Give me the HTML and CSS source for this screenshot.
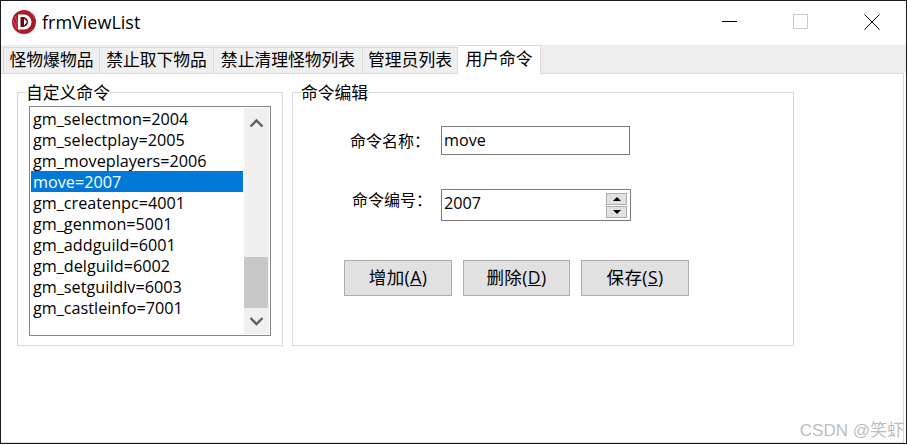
FILE: index.html
```html
<!DOCTYPE html>
<html lang="zh-CN">
<head>
<meta charset="utf-8">
<title>frmViewList</title>
<link rel="stylesheet" href="styles.css">
</head>
<body>
<div class="window">
  <header class="titlebar">
    <svg class="logo" width="24" height="24" viewBox="0 0 24 24">
      <circle cx="12" cy="12" r="12" fill="#a81c2c"/>
      <path d="M3 6 L8 21 M1 10 L5 19 M18 2 L23 8" stroke="#d8505c" stroke-width="1" fill="none"/>
      <path d="M6 4.5 H12 A7.5 7.5 0 0 1 12 19.5 H6 Z" fill="#fff"/>
      <path d="M8.5 7 H11 A5 5 0 0 1 11 17 H8.5 Z" fill="#5c0e18"/>
      <path d="M12 8.5 L15 12 L12 15.5 Z" fill="#fff"/>
    </svg>
    <span class="title">frmViewList</span>
    <div class="controls">
      <svg class="ctl" width="16" height="16" viewBox="0 0 16 16"><path d="M0 7.5 H15" stroke="#000"/></svg>
      <svg class="ctl" width="16" height="16" viewBox="0 0 16 16"><rect x="0.5" y="0.5" width="14" height="14" fill="none" stroke="#ccc"/></svg>
      <svg class="ctl" width="16" height="16" viewBox="0 0 16 16"><path d="M0.5 0.5 L15.5 15.5 M15.5 0.5 L0.5 15.5" stroke="#000"/></svg>
    </div>
  </header>
  <nav class="tabs">
    <div class="tab t1">怪物爆物品</div>
    <div class="tab t2">禁止取下物品</div>
    <div class="tab t3">禁止清理怪物列表</div>
    <div class="tab t4">管理员列表</div>
    <div class="tab active">用户命令</div>
  </nav>
  <main class="panel">
    <fieldset class="group group-list">
      <legend>自定义命令</legend>
      <div class="listbox">
        <ul class="items">
          <li>gm_selectmon=2004</li>
          <li>gm_selectplay=2005</li>
          <li>gm_moveplayers=2006</li>
          <li class="selected">move=2007</li>
          <li>gm_createnpc=4001</li>
          <li>gm_genmon=5001</li>
          <li>gm_addguild=6001</li>
          <li>gm_delguild=6002</li>
          <li>gm_setguildlv=6003</li>
          <li>gm_castleinfo=7001</li>
        </ul>
        <div class="scrollbar">
          <svg class="arrow" width="25" height="30" viewBox="0 0 25 30"><path d="M6.5 18.5 L12.5 12.5 L18.5 18.5" fill="none" stroke="#606060" stroke-width="2.4"/></svg>
          <div class="track"><div class="thumb"></div></div>
          <svg class="arrow" width="25" height="26" viewBox="0 0 25 26"><path d="M6.5 10 L12.5 16 L18.5 10" fill="none" stroke="#606060" stroke-width="2.4"/></svg>
        </div>
      </div>
    </fieldset>
    <fieldset class="group group-edit">
      <legend>命令编辑</legend>
      <div class="row row-name">
        <label class="label">命令名称：</label>
        <div class="input">move</div>
      </div>
      <div class="row row-code">
        <label class="label">命令编号：</label>
        <div class="input spin">
          <span class="spin-value">2007</span>
          <div class="spinner">
            <div class="spin-btn"><i class="up"></i></div>
            <div class="spin-btn"><i class="down"></i></div>
          </div>
        </div>
      </div>
      <div class="buttons">
        <button class="btn b1">增加(<u>A</u>)</button>
        <button class="btn b2">删除(<u>D</u>)</button>
        <button class="btn b3">保存(<u>S</u>)</button>
      </div>
    </fieldset>
  </main>
  <div class="watermark">CSDN @笑虾</div>
</div>
</body>
</html>
```
FILE: styles.css
```css
* { box-sizing: border-box; }
html, body { margin: 0; padding: 0; background: #fff; }
body { width: 907px; height: 445px; overflow: hidden; font-family: "Open Sans", "Noto Sans CJK SC", sans-serif; font-size: 16.2px; color: #000; }
.window { position: relative; width: 907px; height: 444px; border: 1px solid #1a1a1a; display: flex; flex-direction: column; background: #fff; }
.titlebar { height: 44px; display: flex; align-items: center; padding: 0 0 2px 11px; flex: none; }
.logo { flex: none; margin-right: 6px; }
.title { font-size: 18px; font-family: "Open Sans", sans-serif; color: #000; }
.controls { margin-left: auto; display: flex; align-items: center; padding-right: 26px; }
.ctl { display: block; margin-left: 55px; }
.tabs { height: 28px; flex: none; background: #eee; display: flex; padding-left: 2px; align-items: flex-end; }
.tab { height: 26px; font-size: 16.8px; line-height: 23px; text-align: center; border: 1px solid #d9d9d9; border-left: 0; border-bottom: 0; background: #efefef; font-family: "Noto Sans CJK SC", sans-serif; white-space: nowrap; }
.t1 { width: 97px; border-left: 1px solid #d9d9d9; }
.t2 { width: 114px; }
.t3 { width: 149px; }
.t4 { width: 95px; }
.tab.active { width: 83px; height: 29px; margin-bottom: -1px; background: #fff; border: 1px solid #d9d9d9; border-bottom: 0; border-left: 0; line-height: 24px; z-index: 1; }
.panel { flex: 1; display: flex; align-items: flex-start; padding: 9px 0 0 16px; gap: 9px; margin-right: 2px; border-top: 1px solid #d9d9d9; border-right: 1px solid #d9d9d9; border-bottom: 1px solid #d9d9d9; }
.group { margin: 0; padding: 0; border: 1px solid #d9d9d9; height: 263px; flex: none; min-width: 0; }
.group legend { font-size: 16.8px; font-family: "Noto Sans CJK SC", sans-serif; line-height: 18px; height: 18px; padding: 0; }
.group-list { width: 266px; padding: 5px 11px 0; }
.group-list legend { margin-left: -3px; }
.group-edit { width: 502px; padding-left: 51px; }
.group-edit legend { margin-left: -43px; }
.listbox { width: 242px; height: 230px; border: 1px solid #858590; display: flex; padding: 1px; }
.items { list-style: none; margin: 0; padding: 0; width: 212px; flex: none; }
.items li { height: 21px; line-height: 22px; padding-left: 2px; white-space: nowrap; color: #000; }
.items li.selected { background: #0078d7; color: #fff; }
.scrollbar { width: 25px; margin-left: 1px; background: #f0f0f0; display: flex; flex-direction: column; }
.arrow { display: block; flex: none; }
.track { flex: 1; display: flex; flex-direction: column; justify-content: flex-end; }
.thumb { height: 51px; width: 24px; background: #c8c8c8; }
.row { display: flex; align-items: center; }
.label { font-family: "Noto Sans CJK TC", sans-serif; font-size: 16px; }
.row-name { margin-top: 25px; height: 29px; }
.row-name .label { width: 97px; padding: 0 0 2px 6px; }
.row-code { margin-top: 34px; height: 32px; }
.row-code .label { width: 97px; padding: 0 0 12px 8px; }
.row .input { height: 100%; border: 1px solid #7a7a7a; padding-left: 2px; line-height: 27px; width: 189px; }
.row-code .input { width: 190px; display: flex; align-items: center; justify-content: space-between; }
.spin-value { padding-bottom: 3px; }
.spinner { display: flex; flex-direction: column; gap: 1px; margin-right: 3px; }
.spin-btn { width: 21px; height: 12px; background: #e1e1e1; border: 1px solid #adadad; display: flex; align-items: center; justify-content: center; }
.spin-btn i { display: block; width: 0; height: 0; border-left: 4px solid transparent; border-right: 4px solid transparent; }
.spin-btn .up { border-bottom: 4px solid #000; }
.spin-btn .down { border-top: 4px solid #000; }
.buttons { display: flex; gap: 11px; margin-top: 39px; }
.btn { height: 36px; padding: 0 0 3px; background: #e1e1e1; border: 1px solid #adadad; font-family: "Open Sans", "Noto Sans CJK SC", sans-serif; font-size: 17.5px; letter-spacing: 0.4px; color: #000; }
.b1 { width: 108px; }
.b2 { width: 107px; }
.b3 { width: 108px; }
.watermark { position: absolute; right: 2px; bottom: 2px; font-family: "Liberation Sans", "Noto Sans CJK SC", sans-serif; font-size: 17px; color: rgba(130,130,130,0.55); line-height: 20px; }
```
